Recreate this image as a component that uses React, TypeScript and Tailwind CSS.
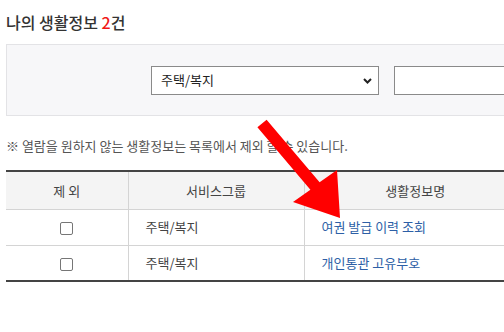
import React from "react";

const rows = [
  { group: "주택/복지", name: "여권 발급 이력 조회" },
  { group: "주택/복지", name: "개인통관 고유부호" },
];

const font = { fontFamily: '"Noto Sans CJK KR", "Noto Sans", sans-serif' };

export default function App() {
  return (
    <div className="relative w-[504px] h-[332px] overflow-hidden bg-white text-[#333]" style={font}>
      <div className="w-[540px] pl-[6px] pt-[10px]">
        <h2 className="text-[16px] leading-[24px] font-medium text-[#333]">
          나의 생활정보 <span className="text-[#f01818]">2</span>건
        </h2>

        {/* search box */}
        <div className="mt-[10px] h-[72px] border border-[#e3e3e6] bg-[#f7f7f9] flex items-center pl-[144px] gap-[15px]">
          <div className="relative shrink-0 w-[228px] h-[29px] border border-[#8a8a8a] bg-white flex items-center pl-[9px] text-[13px] text-[#222]">
            주택/복지
            <svg className="absolute right-[6px] top-[11px]" width="9" height="6" viewBox="0 0 9 6">
              <path d="M1 1 L4.5 4.5 L8 1" fill="none" stroke="#222" strokeWidth="2" />
            </svg>
          </div>
          <div className="shrink-0 w-[140px] h-[29px] border border-[#8a8a8a] bg-white" />
        </div>

        <p className="mt-[21px] text-[13px] leading-[18px] text-[#555]">
          ※ 열람을 원하지 않는 생활정보는 목록에서 제외 할 수 있습니다.
        </p>

        {/* table */}
        <table className="mt-[15px] w-[520px] border-collapse text-[13px] table-fixed">
          <colgroup>
            <col className="w-[122px]" />
            <col className="w-[176px]" />
            <col />
          </colgroup>
          <thead>
            <tr className="h-[38px] bg-[#f4f4f4] border-t-2 border-[#444] text-[#444]">
              <th className="font-normal text-center border-r border-[#d4d4d4]">제 외</th>
              <th className="font-normal text-center border-r border-[#d4d4d4]">서비스그룹</th>
              <th className="font-normal text-center">생활정보명</th>
            </tr>
          </thead>
          <tbody>
            {rows.map((r, i) => (
              <tr
                key={i}
                className={`h-[36px] border-t border-[#d4d4d4] ${i === rows.length - 1 ? "border-b-2 border-b-[#444]" : ""}`}
              >
                <td className="text-center border-r border-[#d4d4d4]">
                  <span className="inline-block align-middle w-[13px] h-[13px] border border-[#767676] rounded-[2px] bg-white" />
                </td>
                <td className="pl-[17px] text-[#444] border-r border-[#d4d4d4]">{r.group}</td>
                <td className="pl-[17px] text-[#2d5fa6]">{r.name}</td>
              </tr>
            ))}
          </tbody>
        </table>
      </div>

      {/* red annotation arrow */}
      <svg className="absolute left-0 top-0 pointer-events-none" width="504" height="332" viewBox="0 0 504 332">
        <polygon
          points="266.6,119.7 319.6,182.2 337,170 340,218 293,202 310.4,189.8 257.4,127.3"
          fill="#ff0000"
        />
      </svg>
    </div>
  );
}
